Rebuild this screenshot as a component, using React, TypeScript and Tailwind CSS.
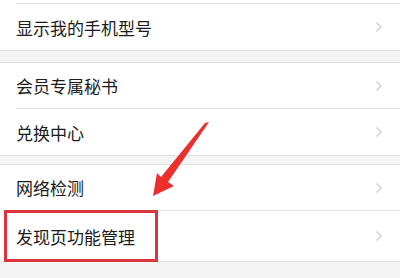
import React from 'react';

const Chevron: React.FC = () => (
  <svg width="8" height="12" viewBox="0 0 8 12" className="mr-[17px]">
    <path d="M1.5 1.5 L6 6 L1.5 10.5" fill="none" stroke="#cfcfd3" strokeWidth="1.4" />
  </svg>
);

const Row: React.FC<{ label: string; h: string; last?: boolean }> = ({ label, h, last }) => (
  <div className="pl-4 bg-white">
    <div
      className={`flex items-center justify-between ${h} ${last ? '' : 'border-b border-[#e3e3e3]'}`}
    >
      <span className="text-[17px] text-[#1c1c1c] leading-none">{label}</span>
      <Chevron />
    </div>
  </div>
);

const App: React.FC = () => {
  return (
    <div
      className="relative w-[400px] h-[278px] overflow-hidden bg-[#f4f4f4]"
      style={{ fontFamily: '"Noto Sans CJK SC", "Noto Sans", sans-serif' }}
    >
      <div className="pl-4 bg-white">
        <div className="h-[4px] border-b border-[#e3e3e3]" />
      </div>
      <div className="border-b border-[#e0e0e0]">
        <Row label="显示我的手机型号" h="h-[46px]" last />
      </div>
      <div className="h-[11px]" />
      <div className="border-y border-[#e0e0e0]">
        <Row label="会员专属秘书" h="h-[46px]" />
        <Row label="兑换中心" h="h-[46px]" last />
      </div>
      <div className="h-[8px]" />
      <div className="border-y border-[#e0e0e0]">
        <Row label="网络检测" h="h-[46px]" />
        <Row label="发现页功能管理" h="h-[50px]" last />
      </div>

      {/* highlight box */}
      <div className="absolute left-[4px] top-[210px] w-[154px] h-[52px] border-[3px] border-[#d9373d]" />

      {/* arrow */}
      <svg className="absolute left-0 top-0" width="400" height="278" viewBox="0 0 400 278">
        <path d="M209 122 L205 123 L161 177 L157 173 L153 196 L174 186 L168 182 Z" fill="#ec2f2c" />
      </svg>
    </div>
  );
};

export default App;
